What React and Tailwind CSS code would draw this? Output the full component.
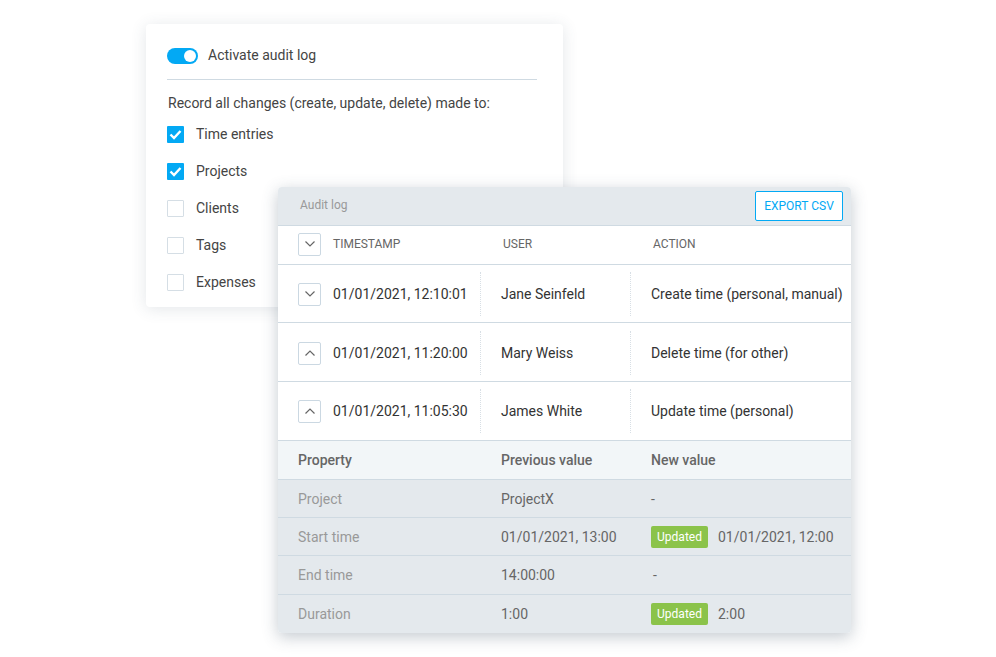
import React from "react";

const Chevron = ({ up }) => (
  <svg width="12" height="8" viewBox="0 0 12 8" fill="none" stroke="#666" strokeWidth="1.2">
    <path d={up ? "M1.5 6.5 L6 2 L10.5 6.5" : "M1.5 1.5 L6 6 L10.5 1.5"} />
  </svg>
);

const ToggleBtn = ({ up }) => (
  <div className="w-[23px] h-[23px] shrink-0 flex items-center justify-center bg-white border border-[#cbd8e2] rounded-[2px]">
    <Chevron up={up} />
  </div>
);

const Check = ({ on, label }) => (
  <div className="flex items-center h-[37px]">
    {on ? (
      <div className="w-[17px] h-[17px] bg-[#03a9f4] flex items-center justify-center rounded-[1px]">
        <svg width="13" height="11" viewBox="0 0 13 11" fill="none" stroke="#fff" strokeWidth="2.4">
          <path d="M1.5 5.5 L5 9 L11.5 2" />
        </svg>
      </div>
    ) : (
      <div className="w-[17px] h-[17px] bg-white border border-[#d5dee5] rounded-[1px]" />
    )}
    <span className="ml-[12px] text-[14px] text-[#444]">{label}</span>
  </div>
);

const Dotted = () => <div className="h-[44px] w-0 border-l border-dotted border-[#d8dfe5]" />;

const Row = ({ h, up, time, user, action, pad = "" }) => (
  <div className={`flex items-center ${h} ${pad} bg-white border-b border-[#cfdae2]`}>
    <div className="w-[202px] flex items-center pl-[20px] shrink-0">
      <ToggleBtn up={up} />
      <span className="ml-[12px] text-[14px] text-[#333] whitespace-nowrap">{time}</span>
    </div>
    <Dotted />
    <div className="w-[149px] pl-[20px] text-[14px] text-[#333] shrink-0">{user}</div>
    <Dotted />
    <div className="pl-[20px] text-[14px] text-[#333] whitespace-nowrap">{action}</div>
  </div>
);

const Badge = () => (
  <span className="w-[57px] h-[22px] flex items-center justify-center bg-[#8bc34a] rounded-[2px] text-[12px] text-white">Updated</span>
);

const Detail = ({ h, name, prev, children, border = true, shift }) => (
  <div className={`flex items-center ${h} ${shift ? "pt-[1px]" : ""} bg-[#e4e9ed] text-[14px] ${border ? "border-b border-[#cfdae2]" : ""}`}>
    <div className="w-[203px] pl-[20px] text-[#999] shrink-0">{name}</div>
    <div className="w-[150px] pl-[20px] text-[#666] whitespace-nowrap shrink-0">{prev}</div>
    <div className="pl-[20px] text-[#666] flex items-center whitespace-nowrap">{children}</div>
  </div>
);

export default function App() {
  return (
    <div className="relative w-[996px] h-[657px] bg-white overflow-hidden pt-[24px] pl-[146px] font-['Roboto',sans-serif]">
      <div className="w-[417px] h-[283px] bg-white rounded-[4px] shadow-[0_2px_16px_rgba(60,80,100,0.14)] pl-[21px]">
        <div className="flex items-center h-[56px] pt-[8px] border-b border-[#cfdae2] w-[370px]">
          <div className="w-[31px] h-[16px] rounded-full bg-[#03a9f4] relative shrink-0">
            <div className="absolute right-[2px] top-[2px] w-[12px] h-[12px] rounded-full bg-white" />
          </div>
          <span className="ml-[10px] text-[14px] text-[#444]">Activate audit log</span>
        </div>
        <div className="mt-[15px] pl-[1px] text-[14px] leading-[16px] text-[#444]">Record all changes (create, update, delete) made to:</div>
        <div className="mt-[5px] flex flex-col">
          <Check on label="Time entries" />
          <Check on label="Projects" />
          <Check label="Clients" />
          <Check label="Tags" />
          <Check label="Expenses" />
        </div>
      </div>

      <div className="absolute left-[278px] top-[187px] w-[573px] h-[446px] rounded-[4px] overflow-hidden shadow-[0_4px_16px_rgba(60,80,100,0.3)] flex flex-col">
        <div className="flex items-center justify-between h-[39px] shrink-0 bg-[#e4e9ed] border-b border-[#cfdae2] pl-[22px] pr-[8px]">
          <span className="text-[12px] text-[#999] relative top-[-1px]">Audit log</span>
          <div className="w-[88px] h-[30px] flex items-center justify-center bg-white border border-[#03a9f4] rounded-[2px] text-[12px] text-[#03a9f4]">EXPORT CSV</div>
        </div>
        <div className="flex items-center h-[39px] pb-[2px] shrink-0 bg-white border-b border-[#cfdae2]">
          <div className="w-[225px] flex items-center pl-[20px] shrink-0">
            <ToggleBtn />
            <span className="ml-[12px] text-[12px] text-[#666]">TIMESTAMP</span>
          </div>
          <div className="w-[150px] text-[12px] text-[#666] shrink-0">USER</div>
          <div className="text-[12px] text-[#666]">ACTION</div>
        </div>
        <Row h="h-[58px]" pad="pt-[1px]" time="01/01/2021, 12:10:01" user="Jane Seinfeld" action="Create time (personal, manual)" />
        <Row h="h-[59px]" pad="pt-[2px]" up time="01/01/2021, 11:20:00" user="Mary Weiss" action="Delete time (for other)" />
        <Row h="h-[59px]" up time="01/01/2021, 11:05:30" user="James White" action="Update time (personal)" />
        <div className="flex items-center h-[39px] shrink-0 bg-[#f2f6f8] border-b border-[#cfdae2] text-[14px] font-medium text-[#666]">
          <div className="w-[203px] pl-[20px] shrink-0">Property</div>
          <div className="w-[150px] pl-[20px] shrink-0">Previous value</div>
          <div className="pl-[20px]">New value</div>
        </div>
        <Detail h="h-[38px]" shift name="Project" prev="ProjectX">-</Detail>
        <Detail h="h-[38px]" shift name="Start time" prev="01/01/2021, 13:00">
          <Badge />
          <span className="ml-[10px]">01/01/2021, 12:00</span>
        </Detail>
        <Detail h="h-[39px]" name="End time" prev="14:00:00"><span className="ml-[2px]">-</span></Detail>
        <Detail h="flex-1" name="Duration" prev="1:00" border={false}>
          <Badge />
          <span className="ml-[10px]">2:00</span>
        </Detail>
      </div>
    </div>
  );
}
